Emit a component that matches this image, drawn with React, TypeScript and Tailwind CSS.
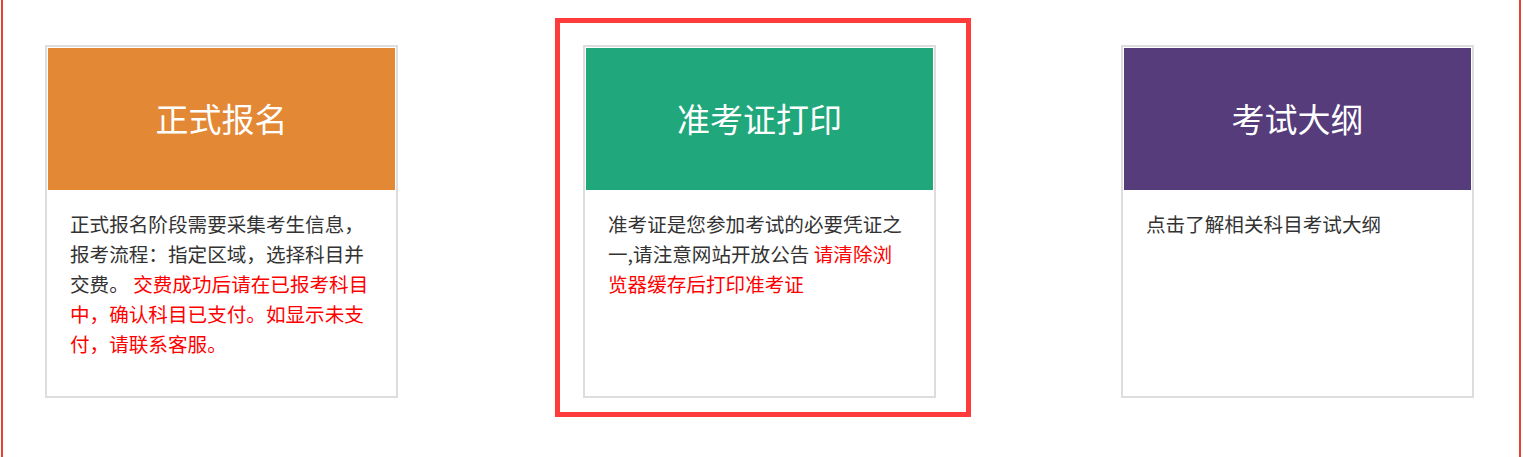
const font = { fontFamily: '"Noto Sans CJK SC", "Noto Sans", sans-serif' };

type Card = {
  title: string;
  color: string;
  body: React.ReactNode;
  marked?: boolean;
};

const cards: Card[] = [
  {
    title: "正式报名",
    color: "bg-[#e38834]",
    body: (
      <>
        正式报名阶段需要采集考生信息，报考流程：指定区域，选择科目并交费。{" "}
        <span className="text-[#ff0000]">
          交费成功后请在已报考科目中，确认科目已支付。如显示未支付，请联系客服。
        </span>
      </>
    ),
  },
  {
    title: "准考证打印",
    color: "bg-[#20a77b]",
    marked: true,
    body: (
      <>
        准考证是您参加考试的必要凭证之一,请注意网站开放公告{" "}
        <span className="text-[#ff0000]">请清除浏览器缓存后打印准考证</span>
      </>
    ),
  },
  {
    title: "考试大纲",
    color: "bg-[#563c7b]",
    body: <>点击了解相关科目考试大纲</>,
  },
];

function EntryCard({ card }: { card: Card }) {
  return (
    <div className="relative w-[353px] h-[353px] shrink-0">
      {card.marked && (
        <div className="absolute -left-[28px] -top-[27px] -right-[35px] -bottom-[19px] border-[5px] border-[#ff3b3b] pointer-events-none" />
      )}
      <div className="h-full border-2 border-[#dddddd] bg-white p-px flex flex-col">
        <div
          className={`${card.color} h-[142px] flex items-center justify-center text-white text-[33px]`}
        >
          {card.title}
        </div>
        <p className="px-[22px] pt-[19px] text-[19.6px] leading-[30px] text-[#333333]">
          {card.body}
        </p>
      </div>
    </div>
  );
}

export default function App() {
  return (
    <div className="h-[457px] bg-white" style={font}>
      <div className="ml-px w-[1520px] h-full border-x-2 border-[#e5432f] pl-[42px] pt-[45px] flex gap-[185px]">
        {cards.map((c) => (
          <EntryCard key={c.title} card={c} />
        ))}
      </div>
    </div>
  );
}
